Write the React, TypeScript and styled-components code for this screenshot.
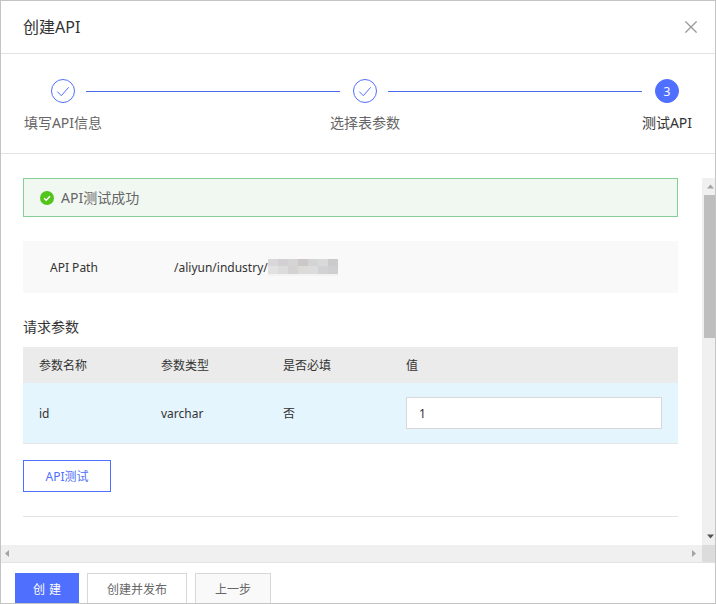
import styled, { createGlobalStyle } from 'styled-components';

const GlobalStyle = createGlobalStyle`
  html, body {
    margin: 0;
    padding: 0;
    background: #fff;
  }
  body {
    font-family: "Noto Sans", "Noto Sans CJK SC", sans-serif;
    font-size: 12px;
    color: #333;
  }
  * {
    box-sizing: border-box;
  }
`;

const BLUE = '#4f6ffe';

const MOSAIC = [
  '#d9d7d9', '#d2d0d3', '#d6d5d6', '#cbc7ca', '#d4d4d4', '#d9d9d9', '#cbcacd',
  '#e2e1e2', '#dcdcdc', '#d4d2d3', '#dddbd8', '#dcdcdc', '#d2d1d3', '#cfced1',
  '#f3f3f3', '#f3f3f3', '#f3f3f3', '#f3f3f3', '#f3f3f3', '#f3f3f3', '#f3f3f3',
];

const Dialog = styled.div`
  width: 716px;
  height: 604px;
  border: 1px solid #c4c4c4;
  display: flex;
  flex-direction: column;
  overflow: hidden;
  background: #fff;
`;

const Header = styled.div`
  height: 53px;
  flex: none;
  border-bottom: 1px solid #e3e3e3;
  padding: 0 18px 0 22px;
  display: flex;
  align-items: center;
  justify-content: space-between;
`;

const Title = styled.h1`
  margin: 0 0 2px;
  font-size: 16px;
  font-weight: 400;
  color: #333;
`;

const CloseIcon = styled.svg`
  width: 12px;
  height: 12px;
  display: block;
`;

const Steps = styled.div`
  height: 100px;
  flex: none;
  border-bottom: 1px solid #e3e3e3;
  padding: 25px 36px 0 50px;
  display: grid;
  grid-template-columns: 24px 1fr 24px 1fr 24px;
`;

const Step = styled.div<{ $last?: boolean }>`
  display: flex;
  flex-direction: column;
  align-items: center;
  gap: 9px;
  font-size: 14px;
  color: ${(p) => (p.$last ? '#333' : '#666')};
  white-space: nowrap;
`;

const StepCircle = styled.div<{ $active?: boolean }>`
  width: 24px;
  height: 24px;
  flex: none;
  border-radius: 50%;
  border: 1px solid ${BLUE};
  background: ${(p) => (p.$active ? BLUE : '#fff')};
  color: #fff;
  font-size: 12px;
  display: flex;
  align-items: center;
  justify-content: center;
`;

const StepLine = styled.div`
  height: 1px;
  background: #4a6bec;
  margin: 12px 13px 0 11px;
`;

const ScrollArea = styled.div`
  flex: 1;
  min-height: 0;
  display: grid;
  grid-template-columns: 1fr 13px;
  grid-template-rows: 1fr 18px;
`;

const Content = styled.div`
  padding: 24px 24px 0 22px;
  overflow: hidden;
`;

const Alert = styled.div`
  height: 39px;
  border: 1px solid #85cf95;
  background: #f1f8f2;
  padding-left: 16px;
  display: flex;
  align-items: center;
  gap: 7px;
  font-size: 14px;
  color: #666;
`;

const AlertText = styled.span`
  margin-bottom: 2px;
`;

const PathBox = styled.div`
  height: 52px;
  margin-top: 24px;
  background: #f9f9f9;
  display: flex;
  align-items: center;
  padding-left: 27px;
  color: #333;
`;

const PathLabel = styled.span`
  width: 124px;
`;

const Mosaic = styled.div`
  width: 70px;
  height: 17px;
  display: grid;
  grid-template-columns: repeat(7, 10px);
  grid-template-rows: 7px 8px 2px;
`;

const MosaicCell = styled.div<{ $color: string }>`
  background: ${(p) => p.$color};
`;

const SectionTitle = styled.h2`
  margin: 25px 0 11px;
  font-size: 14px;
  line-height: 18px;
  font-weight: 400;
  color: #333;
`;

const TableHead = styled.div`
  height: 36px;
  background: #ebebeb;
  display: grid;
  grid-template-columns: 122px 122px 123px 1fr;
  align-items: center;
  padding-left: 16px;
`;

const TableRow = styled.div`
  height: 61px;
  background: #e4f5fe;
  border-bottom: 1px solid #e5e5e5;
  display: grid;
  grid-template-columns: 122px 122px 123px 1fr;
  align-items: center;
  padding: 0 16px;
`;

const ValueInput = styled.input`
  width: 256px;
  height: 32px;
  border: 1px solid #d8d8d8;
  background: #fff;
  padding: 0 12px;
  font: inherit;
  color: #333;
  outline: none;
`;

const TestButton = styled.button`
  display: block;
  width: 88px;
  height: 32px;
  margin-top: 16px;
  border: 1px solid ${BLUE};
  background: #fff;
  color: ${BLUE};
  font: inherit;
  padding: 0;
`;

const Divider = styled.div`
  height: 1px;
  margin-top: 24px;
  background: #e3e3e3;
`;

const VScroll = styled.div`
  margin-top: 24px;
  background: #f0f0f0;
  display: flex;
  flex-direction: column;
  align-items: flex-end;
`;

const ScrollButton = styled.div`
  height: 17px;
  width: 100%;
  flex: none;
  padding-left: 4px;
  display: flex;
  align-items: center;
  justify-content: center;
`;

const VThumb = styled.div`
  width: 11px;
  height: 143px;
  flex: none;
  background: #bebebe;
`;

const Spacer = styled.div`
  flex: 1;
`;

const HScroll = styled.div`
  background: #f0f0f0;
  border-bottom: 1px solid #e3e3e3;
  display: flex;
  align-items: center;
  justify-content: space-between;
  padding: 0 5px 0 4px;
`;

const Corner = styled.div`
  background: #dcdcdc;
  border-bottom: 1px solid #e3e3e3;
`;

const Footer = styled.div`
  height: 40px;
  flex: none;
  padding: 10px 0 0 14px;
  display: flex;
  gap: 8px;
`;

const FooterButton = styled.button<{ $variant?: 'primary' | 'muted'; $width: number }>`
  width: ${(p) => p.$width}px;
  height: 32px;
  flex: none;
  padding: 0 0 0 ${(p) => (p.$variant === 'primary' ? '4px' : '0')};
  font: inherit;
  letter-spacing: ${(p) => (p.$variant === 'primary' ? '4px' : '0')};
  border: ${(p) => (p.$variant === 'primary' ? '0' : '1px solid #d8d8d8')};
  background: ${(p) =>
    p.$variant === 'primary' ? BLUE : p.$variant === 'muted' ? '#f9f9f9' : '#fff'};
  color: ${(p) => (p.$variant === 'primary' ? '#fff' : '#666')};
`;

const Check = () => (
  <svg width="14" height="14" viewBox="0 0 14 14" fill="none">
    <path d="M1.3 7.6 5.3 11.7 12.7 3.3" stroke={BLUE} strokeWidth="1" />
  </svg>
);

const Arrow = ({ d, color = '#a3a3a3' }: { d: string; color?: string }) => (
  <svg width="9" height="9" viewBox="0 0 9 9">
    <path d={d} fill={color} />
  </svg>
);

function App() {
  return (
    <>
      <GlobalStyle />
      <Dialog>
        <Header>
          <Title>创建API</Title>
          <CloseIcon viewBox="0 0 12 12" fill="none">
            <path d="M.4.4l11.2 11.2M11.6.4.4 11.6" stroke="#999" strokeWidth="1.3" />
          </CloseIcon>
        </Header>
        <Steps>
          <Step>
            <StepCircle><Check /></StepCircle>
            填写API信息
          </Step>
          <StepLine />
          <Step>
            <StepCircle><Check /></StepCircle>
            选择表参数
          </Step>
          <StepLine />
          <Step $last>
            <StepCircle $active>3</StepCircle>
            测试API
          </Step>
        </Steps>
        <ScrollArea>
          <Content>
            <Alert>
              <svg width="14" height="14" viewBox="0 0 14 14">
                <circle cx="7" cy="7" r="7" fill="#52c41a" />
                <path d="M4 7.2 6.2 9.3 10 5.2" stroke="#fff" strokeWidth="1.4" fill="none" />
              </svg>
              <AlertText>API测试成功</AlertText>
            </Alert>
            <PathBox>
              <PathLabel>API Path</PathLabel>
              <span>/aliyun/industry/</span>
              <Mosaic>
                {MOSAIC.map((color, i) => (
                  <MosaicCell key={i} $color={color} />
                ))}
              </Mosaic>
            </PathBox>
            <SectionTitle>请求参数</SectionTitle>
            <TableHead>
              <span>参数名称</span>
              <span>参数类型</span>
              <span>是否必填</span>
              <span>值</span>
            </TableHead>
            <TableRow>
              <span>id</span>
              <span>varchar</span>
              <span>否</span>
              <ValueInput defaultValue="1" />
            </TableRow>
            <TestButton>API测试</TestButton>
            <Divider />
          </Content>
          <VScroll>
            <ScrollButton><Arrow d="M4.5 2.5 8 6.5H1z" /></ScrollButton>
            <VThumb />
            <Spacer />
            <ScrollButton><Arrow d="M1 2.5h7L4.5 6.5z" color="#555" /></ScrollButton>
          </VScroll>
          <HScroll>
            <Arrow d="M0 4.5 4 1v7z" />
            <Arrow d="M8 4.5 4 1v7z" />
          </HScroll>
          <Corner />
        </ScrollArea>
        <Footer>
          <FooterButton $variant="primary" $width={64}>创建</FooterButton>
          <FooterButton $width={100}>创建并发布</FooterButton>
          <FooterButton $variant="muted" $width={76}>上一步</FooterButton>
        </Footer>
      </Dialog>
    </>
  );
}

export default App;
